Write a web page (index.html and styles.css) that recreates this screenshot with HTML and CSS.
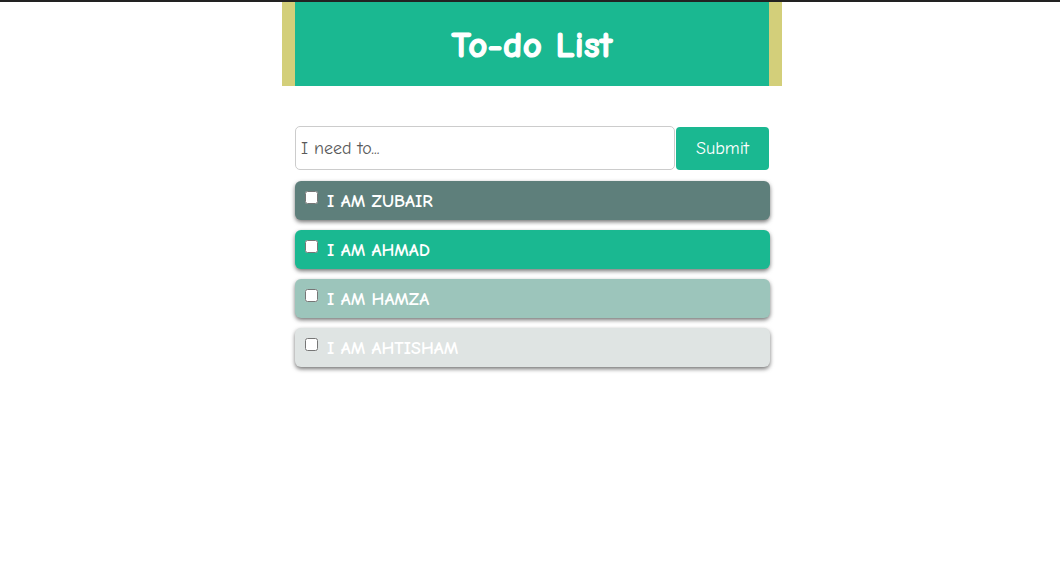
FILE: index.html
```html
<!DOCTYPE html>
<html lang="en">
<head>
<meta charset="utf-8">
<title>To-do List</title>
<link rel="stylesheet" href="styles.css">
</head>
<body>
<div class="app">
  <header class="header">
    <h1 class="title">To-do List</h1>
  </header>
  <form class="todo-form">
    <input class="todo-input" type="text" placeholder="I need to...">
    <button class="todo-submit" type="button">Submit</button>
  </form>
  <ul class="todo-list">
    <li class="todo-item item-1"><input type="checkbox" class="todo-check"><span class="todo-text">I AM ZUBAIR</span></li>
    <li class="todo-item item-2"><input type="checkbox" class="todo-check"><span class="todo-text">I AM AHMAD</span></li>
    <li class="todo-item item-3"><input type="checkbox" class="todo-check"><span class="todo-text">I AM HAMZA</span></li>
    <li class="todo-item item-4"><input type="checkbox" class="todo-check"><span class="todo-text">I AM AHTISHAM</span></li>
  </ul>
</div>
</body>
</html>
```

FILE: styles.css
```css
html, body {
  margin: 0;
  padding: 0;
  background: #ffffff;
}

body {
  border-top: 2px solid #222222;
  font-family: "Comic Sans MS", "Comic Neue", "Open Sans", "DejaVu Sans", sans-serif;
  min-height: 560px;
}

.app {
  width: 500px;
  margin-left: calc(50% - 248px);
  padding-bottom: 20px;
}

.header {
  height: 84px;
  background: #1ab891;
  border-left: 13px solid #d3cf7a;
  border-right: 13px solid #d3cf7a;
  display: flex;
  align-items: center;
  justify-content: center;
}

.title {
  margin: 0;
  color: #ffffff;
  font-size: 37px;
  font-weight: 700;
  letter-spacing: 0.3px;
  padding-top: 2px;
  -webkit-text-stroke: 1.2px #ffffff;
}

.todo-form {
  display: flex;
  gap: 1px;
  margin: 40px 13px 0 13px;
  height: 44px;
}

.todo-input {
  width: 380px;
  box-sizing: border-box;
  height: 44px;
  border: 1px solid #cccccc;
  border-radius: 5px;
  padding: 0 5px;
  font-family: inherit;
  font-size: 18px;
  color: #555555;
  outline: none;
}

.todo-input::placeholder {
  color: #5a5a5a;
}

.todo-submit {
  width: 93px;
  height: 43px;
  margin-top: 1px;
  border: none;
  border-radius: 4px;
  background: #1ab891;
  color: #ffffff;
  font-family: inherit;
  font-size: 18px;
  font-weight: 400;
  padding: 0;
}

.todo-list {
  list-style: none;
  margin: 11px 12px 0 13px;
  padding: 0;
  display: flex;
  flex-direction: column;
  gap: 10px;
}

.todo-item {
  height: 39px;
  box-sizing: border-box;
  border-radius: 6px;
  box-shadow: 0 2px 4px rgba(0, 0, 0, 0.55);
  display: flex;
  align-items: flex-start;
  padding: 10px 0 0 10px;
  color: #ffffff;
  font-size: 18px;
  font-weight: 700;
}

.todo-check {
  width: 13px;
  height: 13px;
  margin: 0 9px 0 0;
}

.todo-text {
  line-height: 20px;
  margin-top: 1px;
}

.item-1 { background: #5e7f7b; }
.item-2 { background: #1ab891; }
.item-3 { background: #9cc5bb; }
.item-4 { background: #dfe4e3; }
```
